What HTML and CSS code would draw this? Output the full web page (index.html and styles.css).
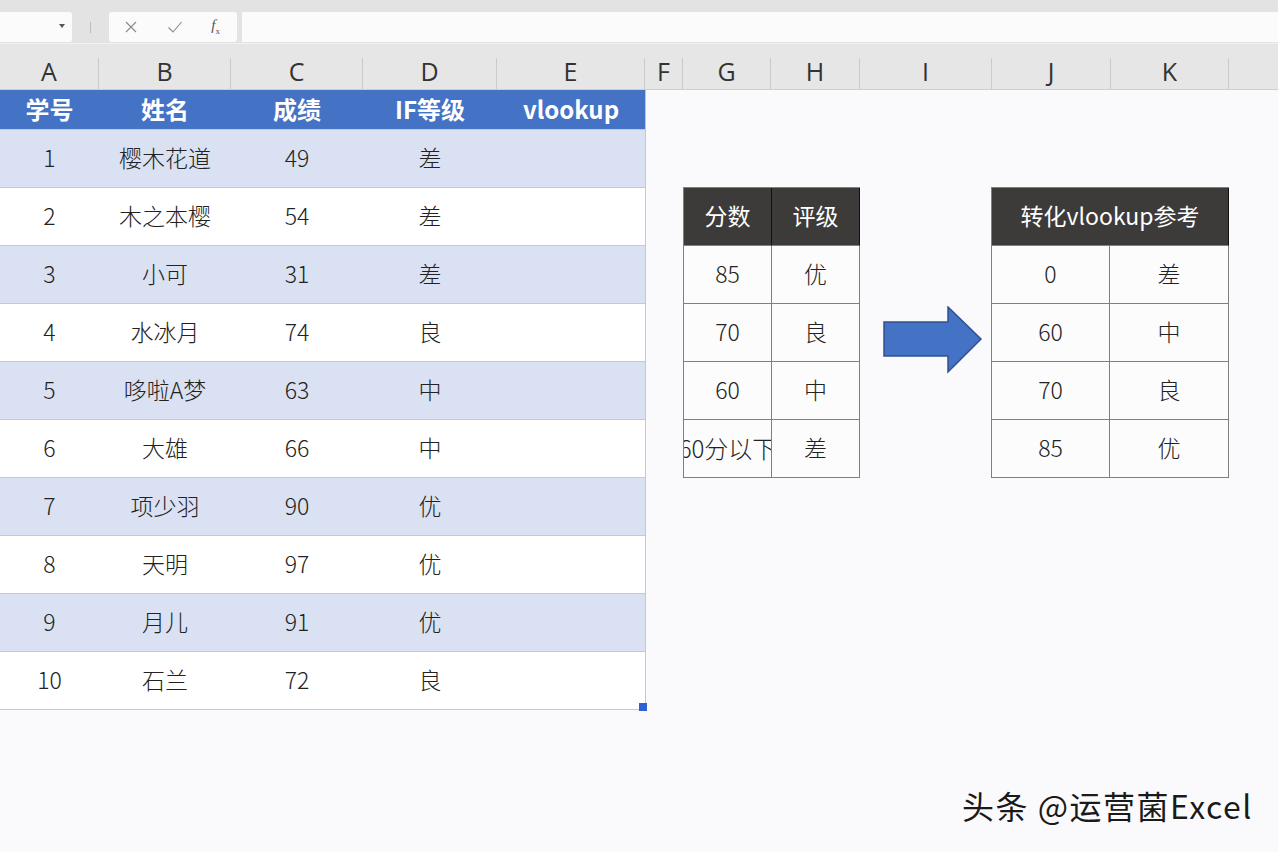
FILE: index.html
```html
<!DOCTYPE html>
<html lang="zh-CN">
<head>
<meta charset="utf-8">
<title>IF vs VLOOKUP</title>
<link rel="stylesheet" href="styles.css">
</head>
<body>
<div class="toolbar">
  <div class="namebox"><span class="caret"></span></div>
  <div class="vsep"></div>
  <div class="fbtns">
    <svg class="ico" width="14" height="14" viewBox="0 0 14 14"><path d="M2 2 L12 12 M12 2 L2 12" stroke="#8a8a8a" stroke-width="1.1" fill="none"/></svg>
    <svg class="ico" width="16" height="14" viewBox="0 0 16 14"><path d="M1.5 7.5 L6 12 L14.5 2" stroke="#8a8a8a" stroke-width="1.1" fill="none"/></svg>
    <span class="fx">f<sub>x</sub></span>
  </div>
  <div class="finput"></div>
</div>

<div class="colhdr">
  <div class="ch w-a">A</div>
  <div class="ch w-b">B</div>
  <div class="ch w-c">C</div>
  <div class="ch w-d">D</div>
  <div class="ch w-e">E</div>
  <div class="ch w-f">F</div>
  <div class="ch w-g">G</div>
  <div class="ch w-h">H</div>
  <div class="ch w-i">I</div>
  <div class="ch w-j">J</div>
  <div class="ch w-k">K</div>
  <div class="ch w-l"></div>
</div>

<div class="main">
  <div class="datatable">
    <div class="row head"><div>学号</div><div>姓名</div><div>成绩</div><div>IF等级</div><div>vlookup</div></div>
    <div class="row band"><div>1</div><div>樱木花道</div><div>49</div><div>差</div><div></div></div>
    <div class="row"><div>2</div><div>木之本樱</div><div>54</div><div>差</div><div></div></div>
    <div class="row band"><div>3</div><div>小可</div><div>31</div><div>差</div><div></div></div>
    <div class="row"><div>4</div><div>水冰月</div><div>74</div><div>良</div><div></div></div>
    <div class="row band"><div>5</div><div>哆啦A梦</div><div>63</div><div>中</div><div></div></div>
    <div class="row"><div>6</div><div>大雄</div><div>66</div><div>中</div><div></div></div>
    <div class="row band"><div>7</div><div>项少羽</div><div>90</div><div>优</div><div></div></div>
    <div class="row"><div>8</div><div>天明</div><div>97</div><div>优</div><div></div></div>
    <div class="row band"><div>9</div><div>月儿</div><div>91</div><div>优</div><div></div></div>
    <div class="row last"><div>10</div><div>石兰</div><div>72</div><div>良</div><div></div></div>
    <span class="handle"></span>
  </div>

  <div class="right">
    <div class="ref t1">
      <div class="rh">分数</div><div class="rh">评级</div>
      <div>85</div><div>优</div>
      <div>70</div><div>良</div>
      <div>60</div><div>中</div>
      <div class="clip"><span>60分以下</span></div><div>差</div>
    </div>

    <svg class="arrow" width="100" height="68" viewBox="0 0 100 68">
      <path d="M1 16 L65 16 L65 1 L98 33 L65 66 L65 50 L1 50 Z" fill="#4472c4" stroke="#2f528f" stroke-width="1.5" stroke-linejoin="miter"/>
    </svg>

    <div class="ref t2">
      <div class="rh span2">转化vlookup参考</div>
      <div>0</div><div>差</div>
      <div>60</div><div>中</div>
      <div>70</div><div>良</div>
      <div>85</div><div>优</div>
    </div>
  </div>

  <div class="watermark">头条 @运营菌Excel</div>
</div>
</body>
</html>
```

FILE: styles.css
```css
* { box-sizing: border-box; }
html, body {
  margin: 0;
  padding: 0;
  width: 1278px;
  height: 852px;
  overflow: hidden;
  background: #fafafc;
  font-family: "Noto Sans CJK SC", "Noto Sans", sans-serif;
  color: #222;
}

/* formula bar */
.toolbar {
  height: 44px;
  background: #e3e3e3;
  display: flex;
  align-items: flex-start;
  padding-top: 12px;
  border-bottom: 1px solid #f2f2f2;
}
.namebox {
  width: 72px;
  height: 30px;
  background: #fbfbfb;
  border-radius: 0 3px 3px 0;
  position: relative;
}
.caret {
  position: absolute;
  right: 7px;
  top: 12px;
  width: 0;
  height: 0;
  border-left: 3.5px solid transparent;
  border-right: 3.5px solid transparent;
  border-top: 4px solid #555;
}
.vsep {
  width: 1px;
  height: 11px;
  margin: 10px 18px 0 18px;
  background: #bdbdbd;
}
.fbtns {
  width: 128px;
  height: 30px;
  background: #fbfbfb;
  border-radius: 3px;
  display: flex;
  align-items: center;
  justify-content: space-between;
  padding: 0 17px 0 15px;
}
.fx {
  font-family: "Liberation Serif", serif;
  font-style: italic;
  font-size: 15px;
  color: #555;
  line-height: 1;
}
.fx sub { font-size: 9px; font-style: normal; }
.finput {
  flex: 1;
  height: 30px;
  margin-left: 5px;
  background: #fbfbfb;
}

/* column headers */
.colhdr {
  height: 46px;
  background: #e6e6e6;
  display: flex;
  align-items: flex-end;
  border-bottom: 1px solid #cfcfcf;
}
.ch {
  height: 31px;
  border-right: 1px solid #cacaca;
  display: flex;
  align-items: center;
  justify-content: center;
  font-family: "Open Sans", "Noto Sans", sans-serif;
  font-size: 25px;
  color: #333;
  line-height: 1;
  padding-bottom: 4px;
}
.w-a { width: 99px; }
.w-b { width: 132px; }
.w-c { width: 132px; }
.w-d { width: 134px; }
.w-e { width: 148px; }
.w-f { width: 38px; }
.w-g { width: 88px; }
.w-h { width: 89px; }
.w-i { width: 132px; }
.w-j { width: 119px; }
.w-k { width: 118px; }
.w-l { flex: 1; border-right: none; }

/* main area */
.main {
  display: flex;
  align-items: flex-start;
  position: relative;
  height: 761px;
}
.datatable {
  width: 646px;
  border-right: 1px solid #b8c9e6;
  position: relative;
  background: #fff;
}
.row {
  display: grid;
  grid-template-columns: 99px 132px 132px 134px 148px;
  height: 58px;
  border-top: 1px solid #bccbe5;
  font-size: 23px;
  font-weight: 300;
  align-items: center;
  text-align: center;
  background: #fff;
  padding-bottom: 3px;
}
.row.band { background: #d9e1f2; }
.row.last { border-bottom: 1px solid #bccbe5; height: 59px; }
.row.head {
  height: 39px;
  border-top: none;
  background: #4472c4;
  color: #fff;
  font-weight: 700;
  font-size: 24px;
  padding-bottom: 2px;
}
.handle {
  position: absolute;
  right: -2px;
  bottom: -1px;
  width: 8px;
  height: 8px;
  background: #2f5fd0;
}

.right {
  display: flex;
  align-items: flex-start;
  padding-top: 97px;
  padding-left: 37px;
}
.ref {
  display: grid;
  border-top: 1px solid #7f7f7f;
  border-left: 1px solid #7f7f7f;
  font-size: 23px;
  font-weight: 300;
  background: #fcfcfc;
}
.ref > div {
  height: 58px;
  border-right: 1px solid #7f7f7f;
  border-bottom: 1px solid #7f7f7f;
  display: flex;
  align-items: center;
  justify-content: center;
  white-space: nowrap;
  padding-bottom: 3px;
}
.t1 { grid-template-columns: 88px 88px; width: 177px; }
.t2 { grid-template-columns: 118px 119px; width: 238px; margin-left: 8px; }
.ref > .rh {
  background: #3d3a3a;
  color: #fff;
  font-size: 23px;
  font-weight: 400;
  border-right-color: #111;
}
.ref > .span2 { grid-column: span 2; }
.clip { overflow: hidden; }
.clip span { flex: none; font-size: 24px; }

.arrow {
  margin-left: 23px;
  margin-top: 119px;
  display: block;
}

.watermark {
  position: absolute;
  left: 962px;
  top: 692px;
  font-family: "Noto Sans CJK SC", "Liberation Sans", sans-serif;
  font-size: 32px;
  font-weight: 400;
  color: #1a1a1a;
  letter-spacing: 1.5px;
  text-shadow: 0 0 2px #fff, 0 0 2px #fff;
}
```
